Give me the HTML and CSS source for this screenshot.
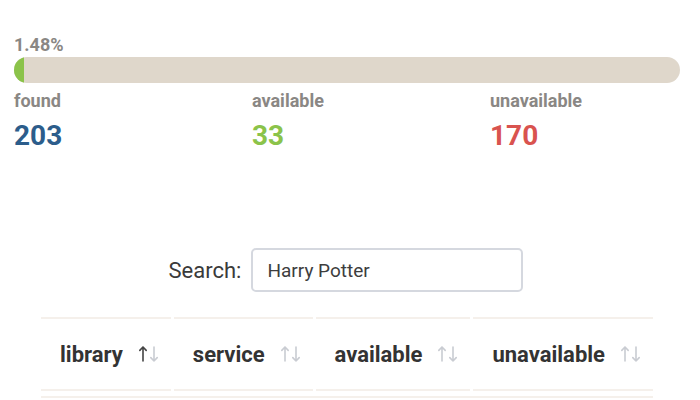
FILE: index.html
```html
<!DOCTYPE html>
<html>
<head>
<meta charset="utf-8">
<link rel="stylesheet" href="styles.css">
</head>
<body>
<section class="stats">
  <div class="percent">1.48%</div>
  <div class="bar"><div class="bar-fill" style="width:1.48%"></div></div>
  <div class="counts">
    <div class="count">
      <div class="count-label">found</div>
      <div class="count-value found">203</div>
    </div>
    <div class="count">
      <div class="count-label">available</div>
      <div class="count-value available">33</div>
    </div>
    <div class="count">
      <div class="count-label">unavailable</div>
      <div class="count-value unavailable">170</div>
    </div>
  </div>
</section>

<div class="search">
  <label class="search-label" for="q">Search:</label>
  <input id="q" class="search-input" type="text" value="Harry Potter">
</div>

<table class="results">
  <thead>
    <tr>
      <th><span class="th-inner"><span>library</span>
        <svg class="sort" width="22" height="18" viewBox="0 0 22 18"><path class="active" d="M5 16V2M1.8 5.4L5 2l3.2 3.4"/><path d="M16 2v14M12.8 12.6L16 16l3.2-3.4"/></svg></span></th>
      <th><span class="th-inner"><span>service</span>
        <svg class="sort" width="22" height="18" viewBox="0 0 22 18"><path d="M5 16V2M1.8 5.4L5 2l3.2 3.4"/><path d="M16 2v14M12.8 12.6L16 16l3.2-3.4"/></svg></span></th>
      <th><span class="th-inner"><span>available</span>
        <svg class="sort" width="22" height="18" viewBox="0 0 22 18"><path d="M5 16V2M1.8 5.4L5 2l3.2 3.4"/><path d="M16 2v14M12.8 12.6L16 16l3.2-3.4"/></svg></span></th>
      <th><span class="th-inner"><span>unavailable</span>
        <svg class="sort" width="22" height="18" viewBox="0 0 22 18"><path d="M5 16V2M1.8 5.4L5 2l3.2 3.4"/><path d="M16 2v14M12.8 12.6L16 16l3.2-3.4"/></svg></span></th>
    </tr>
  </thead>
</table>
<div class="body-line"></div>
</body>
</html>
```

FILE: styles.css
```css
html, body {
  margin: 0;
  padding: 0;
  background: #ffffff;
  font-family: Roboto, "Liberation Sans", sans-serif;
}

.stats {
  padding: 34px 20px 0 14px;
}

.percent {
  font-size: 18px;
  line-height: 21px;
  font-weight: 700;
  color: #8a8784;
}

.bar {
  margin-top: 2px;
  width: 666px;
  height: 26px;
  border-radius: 13px;
  background: #dfd7cb;
  overflow: hidden;
}

.bar-fill {
  height: 100%;
  background: #8bc34a;
}

.counts {
  display: grid;
  grid-template-columns: 238px 238px 238px;
  margin-top: 7px;
}

.count-label {
  font-size: 18px;
  line-height: 21px;
  font-weight: 700;
  color: #8a8784;
}

.count-value {
  margin-top: 8px;
  font-size: 28px;
  line-height: 33px;
  font-weight: 700;
}

.count-value.found { color: #2c5d8b; }
.count-value.available { color: #8bc34a; }
.count-value.unavailable { color: #d9534f; }

.search {
  display: flex;
  align-items: center;
  justify-content: center;
  gap: 10px;
  margin-top: 96px;
  padding-right: 8px;
}

.search-label {
  font-size: 22px;
  color: #3a3a3a;
}

.search-input {
  box-sizing: border-box;
  width: 272px;
  height: 44px;
  border: 2px solid #d5d8df;
  border-radius: 5px;
  padding: 0 14px;
  font-family: Roboto, "Liberation Sans", sans-serif;
  font-size: 19px;
  color: #3d3d3d;
  background: #ffffff;
  outline: none;
}

.results {
  margin: 25px 0 0 38px;
  border-collapse: separate;
  border-spacing: 3px 0;
}

.results th {
  height: 70px;
  padding: 0 11px 0 19px;
  border-top: 2px solid #f5f0eb;
  border-bottom: 2px solid #f5f0eb;
  font-size: 22px;
  font-weight: 700;
  color: #333333;
  text-align: left;
  white-space: nowrap;
}

.th-inner {
  display: flex;
  align-items: center;
  gap: 15px;
}

.sort {
  display: block;
}

.sort path {
  fill: none;
  stroke: #c9ccd2;
  stroke-width: 1.6;
  stroke-linecap: round;
  stroke-linejoin: round;
}

.sort path.active {
  stroke: #444444;
}

.body-line {
  margin: 5px 0 0 41px;
  width: 612px;
  border-top: 2px solid #f5f0eb;
}
```
